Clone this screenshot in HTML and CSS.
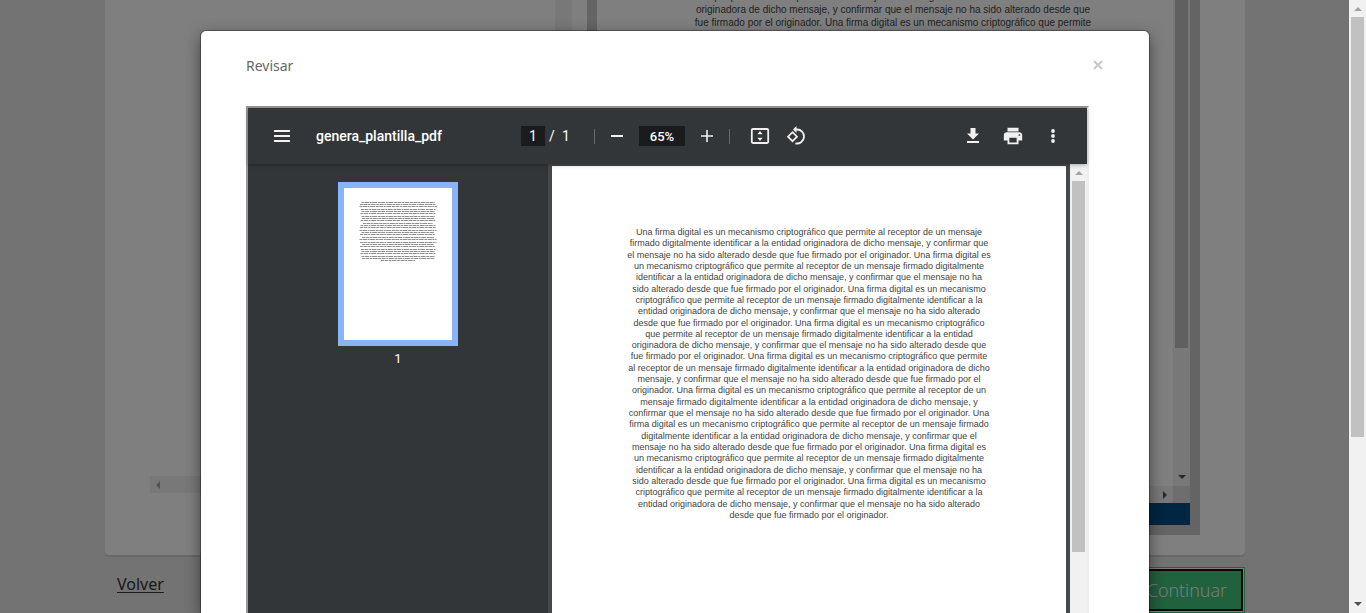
FILE: index.html
```html
<!DOCTYPE html>
<html lang="es">
<head>
<meta charset="utf-8">
<title>Revisar</title>
<link rel="stylesheet" href="styles.css">
</head>
<body>
<div class="screen">
  <main class="page">
    <section class="card">
      <div class="source">
        <div class="source-body"><div class="track"></div></div>
        <div class="track-h"><i class="arrow left"></i></div>
      </div>
      <div class="preview">
        <div class="preview-body">
          <p class="doc doc-large">que permite al receptor de un mensaje firmado digitalmente identificar a la entidad
originadora de dicho mensaje, y confirmar que el mensaje no ha sido alterado desde que
fue firmado por el originador. Una firma digital es un mecanismo criptográfico que permite</p>
          <div class="track preview-track"><div class="thumb"></div><i class="arrow down"></i></div>
        </div>
        <div class="preview-scroll"><div class="track-h end"><i class="arrow right"></i></div><div class="corner"></div></div>
        <div class="preview-bar"></div>
      </div>
    </section>
    <footer class="actions">
      <a class="back" href="#">Volver</a>
      <button class="next" type="button">Continuar</button>
    </footer>
  </main>

  <div class="backdrop">
    <div class="modal" role="dialog" aria-labelledby="modal-title">
      <header class="modal-head">
        <h1 id="modal-title">Revisar</h1>
        <button class="close" type="button" aria-label="Cerrar"><svg width="10" height="10" viewBox="0 0 10 10"><path d="M1 1l8 8M9 1l-8 8" stroke="#c8c8c8" stroke-width="2"/></svg></button>
      </header>
      <div class="viewer">
        <div class="toolbar">
          <div class="tools">
            <button class="tool" type="button" aria-label="Menú"><svg width="24" height="24" viewBox="0 0 24 24"><path d="M4 6h16v2H4zM4 11h16v2H4zM4 16h16v2H4z"/></svg></button>
            <span class="name">genera_plantilla_pdf</span>
          </div>
          <div class="tools">
            <input class="field page-no" type="text" value="1" aria-label="Página">
            <span class="slash">/</span><span class="total">1</span>
            <span class="divider after-pages"></span>
            <button class="tool" type="button" aria-label="Alejar"><svg width="20" height="20" viewBox="0 0 20 20"><path d="M4 9h12v2H4z"/></svg></button>
            <input class="field zoom" type="text" value="65%" aria-label="Zoom">
            <button class="tool" type="button" aria-label="Acercar"><svg width="20" height="20" viewBox="0 0 20 20"><path d="M9.200 4h1.600v5.200H16v1.600h-5.200V16H9.200v-5.200H4V9.200h5.200z"/></svg></button>
            <span class="divider after-zoom"></span>
            <button class="tool" type="button" aria-label="Ajustar a la página"><svg width="20" height="20" viewBox="0 0 20 20"><rect x="1.800" y="3" width="16.400" height="14" rx="1.200" fill="none" stroke="#f1f1f1" stroke-width="1.800"/><path d="M10 5l2.600 3.200H7.400zM10 15l-2.600-3.200h5.200z"/></svg></button>
            <button class="tool" type="button" aria-label="Girar"><svg width="20" height="20" viewBox="0 0 20 20"><path d="M6.500 6.200L11 10.700l-4.500 4.500L2 10.700z" fill="none" stroke="#f1f1f1" stroke-width="1.700"/><path d="M9 3.500h1.700a7 7 0 1 1-1.300 13.800" fill="none" stroke="#f1f1f1" stroke-width="1.800"/><path d="M10.500 0v7L7 3.500z"/></svg></button>
          </div>
          <div class="tools last">
            <button class="tool" type="button" aria-label="Descargar"><svg width="24" height="24" viewBox="0 0 24 24"><path d="M9.500 4h5v5.500h3.500L12 15.500 6 9.500h3.500zM6 17h12v2H6z"/></svg></button>
            <button class="tool" type="button" aria-label="Imprimir"><svg width="22" height="22" viewBox="0 0 24 24"><path d="M19 8H5c-1.660 0-3 1.340-3 3v6h4v4h12v-4h4v-6c0-1.660-1.340-3-3-3zm-3 11H8v-5h8v5zm3-7c-.55 0-1-.45-1-1s.45-1 1-1 1 .45 1 1-.45 1-1 1zm-1-9H6v4h12V3z"/></svg></button>
            <button class="tool" type="button" aria-label="Más opciones"><svg width="20" height="20" viewBox="0 0 20 20"><circle cx="10" cy="5" r="1.900"/><circle cx="10" cy="10" r="1.900"/><circle cx="10" cy="15" r="1.900"/></svg></button>
          </div>
        </div>
        <div class="content">
          <nav class="sidebar">
            <button class="thumbnail" type="button" aria-label="Página 1"><svg width="108" height="152" viewBox="0 0 108 152"><g stroke="#444" stroke-width="1" stroke-opacity=".6" fill="none"><path stroke-dasharray="3 .5 4 .6 2 .5 5 .6" d="M17.500 14.500h73.500M16 16.500h76M15.500 18.500h77.500M17 21.500h74.500M17.500 23.500h73.500M16.500 25.500h75.500M17.500 28.500h73.500M18 30.500h72.500M16.500 32.500h75M19 35.500h69.500M16.500 37.500h75.500M16 39.500h76M15.500 42.500h77M17.500 44.500h73M16 46.500h75.500M18 49.500h72M15.500 51.500h77M16 54.500h76.500M18 56.500h71.500M16 58.500h75.500M17 61.500h74.500M17.500 63.500h73.500M16.500 65.500h75.500M17.500 68.500h73.500M18 70.500h72.500M37 72.500h34"/></g></svg></button>
            <span class="thumb-no">1</span>
          </nav>
          <div class="pages">
            <article class="sheet">
              <p class="doc">Una firma digital es un mecanismo criptográfico que permite al receptor de un mensaje
firmado digitalmente identificar a la entidad originadora de dicho mensaje, y confirmar que
el mensaje no ha sido alterado desde que fue firmado por el originador. Una firma digital es
un mecanismo criptográfico que permite al receptor de un mensaje firmado digitalmente
identificar a la entidad originadora de dicho mensaje, y confirmar que el mensaje no ha
sido alterado desde que fue firmado por el originador. Una firma digital es un mecanismo
criptográfico que permite al receptor de un mensaje firmado digitalmente identificar a la
entidad originadora de dicho mensaje, y confirmar que el mensaje no ha sido alterado
desde que fue firmado por el originador. Una firma digital es un mecanismo criptográfico
que permite al receptor de un mensaje firmado digitalmente identificar a la entidad
originadora de dicho mensaje, y confirmar que el mensaje no ha sido alterado desde que
fue firmado por el originador. Una firma digital es un mecanismo criptográfico que permite
al receptor de un mensaje firmado digitalmente identificar a la entidad originadora de dicho
mensaje, y confirmar que el mensaje no ha sido alterado desde que fue firmado por el
originador. Una firma digital es un mecanismo criptográfico que permite al receptor de un
mensaje firmado digitalmente identificar a la entidad originadora de dicho mensaje, y
confirmar que el mensaje no ha sido alterado desde que fue firmado por el originador. Una
firma digital es un mecanismo criptográfico que permite al receptor de un mensaje firmado
digitalmente identificar a la entidad originadora de dicho mensaje, y confirmar que el
mensaje no ha sido alterado desde que fue firmado por el originador. Una firma digital es
un mecanismo criptográfico que permite al receptor de un mensaje firmado digitalmente
identificar a la entidad originadora de dicho mensaje, y confirmar que el mensaje no ha
sido alterado desde que fue firmado por el originador. Una firma digital es un mecanismo
criptográfico que permite al receptor de un mensaje firmado digitalmente identificar a la
entidad originadora de dicho mensaje, y confirmar que el mensaje no ha sido alterado
desde que fue firmado por el originador.</p>
            </article>
          </div>
          <div class="track viewer-track"><i class="arrow up"></i><div class="thumb"></div></div>
        </div>
      </div>
    </div>
  </div>
</div>
<div class="track window-track"><i class="arrow up"></i><div class="thumb"></div><i class="arrow down"></i></div>
</body>
</html>
```
FILE: styles.css
```css
* { box-sizing: border-box; }
body {
  margin: 0;
  display: flex;
  height: 100vh;
  overflow: hidden;
  background: #e6e6e6;
  font-family: "Noto Sans", "Open Sans", sans-serif;
}
button { border: 0; padding: 0; background: none; font: inherit; }
.screen { position: relative; flex: 1; min-width: 0; overflow: hidden; }

/* Scrollbars */
.track {
  width: 17px;
  flex: none;
  background: #f1f1f1;
  display: flex;
  flex-direction: column;
  align-items: center;
}
.thumb { width: 13px; background: #c1c1c1; }
.arrow { border: 4px solid transparent; margin: 4px; flex: none; }
.up { border-bottom-color: #a3a3a3; border-top-width: 0; margin: 7px 4px 6px; }
.down { border-top-color: #505050; border-bottom-width: 0; margin: 7px 4px; }
.left { border-right-color: #a3a3a3; border-left-width: 0; margin: 4px 6px; }
.right { border-left-color: #505050; border-right-width: 0; margin: 4px 6px; }
.track-h { display: flex; align-items: center; height: 17px; background: #f1f1f1; }
.end { flex: 1; justify-content: flex-end; }
.window-track { justify-content: space-between; }
.window-track .thumb { height: 420px; margin-bottom: auto; }

/* Page behind the dialog */
.page { display: flex; flex-direction: column; height: 100%; }
.card {
  flex: 1;
  min-height: 0;
  margin: 0 104px 0 105px;
  padding: 0 45px 20px;
  display: grid;
  grid-template-columns: 422fr 613fr;
  gap: 15px;
  background: #fff;
  border-radius: 0 0 4px 4px;
  box-shadow: 0 2px 0 #d0d0d0;
}
.source { display: flex; flex-direction: column; padding-bottom: 42px; }
.source-body { flex: 1; display: flex; justify-content: flex-end; }
.preview {
  display: flex;
  flex-direction: column;
  min-height: 0;
  border: solid #c8c8c8;
  border-width: 0 10px 10px;
}
.preview-body { flex: 1; min-height: 0; display: flex; overflow: hidden; }
.preview-body .doc { flex: 1; }
.preview-track .thumb { height: 348px; }
.preview-track .arrow { margin-top: auto; }
.preview-scroll { display: flex; }
.corner { width: 17px; background: #dcdcdc; }
.preview-bar { height: 22px; background: #004c84; }
.actions {
  height: 58px;
  padding: 12px 104px 0 117px;
  display: flex;
  justify-content: space-between;
  align-items: flex-start;
}
.back { color: #333; font-size: 16px; line-height: 34px; text-underline-offset: 2px; }
.next {
  height: 46px;
  padding: 0 17px;
  color: #fff;
  font-family: "Open Sans", sans-serif;
  font-size: 18px;
  font-weight: 300;
  background: #40c27c;
  border: 1px solid #40c27c;
  box-shadow: inset 0 0 0 1px #fff, inset 0 0 0 3px #101010;
}

/* Dialog */
.backdrop {
  position: absolute;
  inset: 0;
  display: flex;
  padding: 31px 200px 0 201px;
  background: rgba(0, 0, 0, .5);
}
.modal {
  flex: 1;
  min-width: 0;
  display: flex;
  flex-direction: column;
  padding: 0 60px 0 45px;
  background: #fff;
  border-radius: 5px 5px 0 0;
  box-shadow: 0 0 0 1px rgba(0, 0, 0, .3), 0 5px 15px rgba(0, 0, 0, .5);
}
.modal-head {
  flex: none;
  height: 75px;
  padding-bottom: 7px;
  margin-right: -14px;
  display: flex;
  justify-content: space-between;
  align-items: center;
}
.modal-head h1 { margin: 0; font-size: 14px; font-weight: 400; color: #666; }
.close { display: flex; }
.viewer {
  flex: 1;
  min-height: 0;
  display: flex;
  flex-direction: column;
  border: solid #999;
  border-right-color: #eee;
  border-width: 2px 2px 0;
  background: #323639;
}
.toolbar {
  position: relative;
  z-index: 1;
  flex: none;
  height: 56px;
  padding: 0 16px;
  display: grid;
  grid-template-columns: 1fr auto 1fr;
  background: #323639;
  color: #fff;
  font: 14px Roboto, sans-serif;
  box-shadow: 0 1px 4px rgba(0, 0, 0, .3);
}
.tools { display: flex; align-items: center; }
.last { justify-content: flex-end; gap: 4px; }
.tool { width: 36px; height: 36px; display: flex; align-items: center; justify-content: center; fill: #f1f1f1; }
.name { margin-left: 16px; font-weight: 500; }
.field {
  height: 20px;
  padding: 0;
  border: 0;
  background: #191b1c;
  color: #fff;
  font: 14px Roboto, sans-serif;
  text-align: center;
}
.page-no { width: 24px; }
.slash { width: 17px; padding-left: 4px; }
.total { width: 8px; }
.toolbar .zoom { width: 46px; margin: 0 4px; font-size: 13px; font-weight: 500; }
.divider { width: 1px; height: 15px; background: #66696b; }
.after-pages { margin: 0 4px 0 24px; }
.after-zoom { margin: 0 12px 0 4px; }
.content { flex: 1; min-height: 0; display: flex; }
.sidebar {
  width: 300px;
  flex: none;
  display: flex;
  flex-direction: column;
  align-items: center;
  padding-top: 18px;
}
.thumbnail { display: flex; border: 6px solid #8ab4f8; background: #fff; }
.thumb-no { margin-top: 4px; color: #fff; font: 13px/18px Roboto, sans-serif; }
.pages {
  flex: 1;
  min-width: 0;
  padding: 2px 4px 0;
  background: #43484c;
  overflow: hidden;
}
.sheet { height: 100%; padding-top: 61px; background: #fff; }
.doc {
  margin: 0;
  white-space: pre-line;
  text-align: center;
  color: #444;
  font-family: "Liberation Sans", Arial, sans-serif;
  font-size: 9px;
  line-height: 1.258;
}
.doc-large { font-size: 10px; line-height: 13px; margin-top: -10px; padding-left: 16px; }
.viewer-track .thumb { height: 371px; }
```
